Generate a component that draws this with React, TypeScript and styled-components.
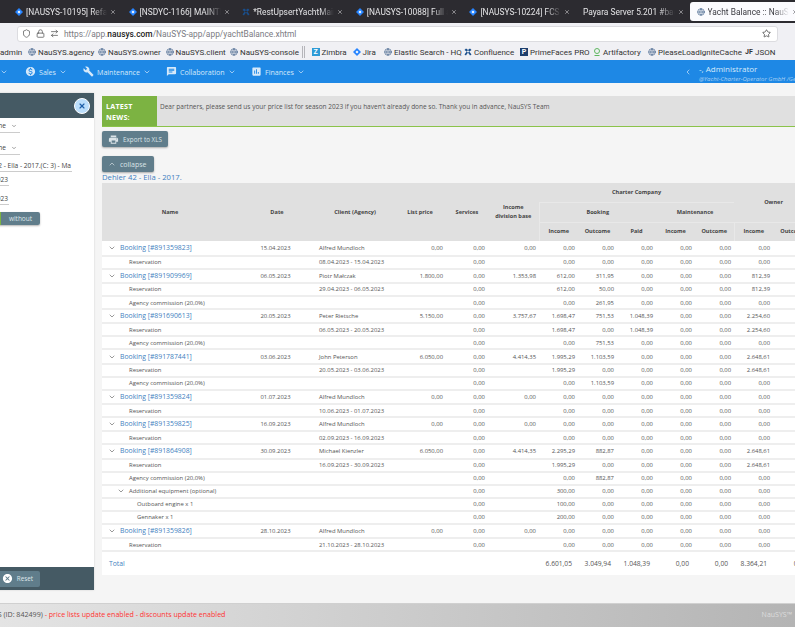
import React from 'react';
import styled, { createGlobalStyle } from 'styled-components';
import { ChevronDown, ChevronUp, ChevronLeft, X, Shield, Lock, ArrowRightLeft, Star, Globe } from 'lucide-react';
import { MdMonetizationOn, MdBuild, MdChat, MdAssessment, MdPrint, MdCancel } from 'react-icons/md';

const Global = createGlobalStyle`
  html, body { margin: 0; padding: 0; background: #f5f5f5; }
  body { font-family: "Open Sans", "Noto Sans", sans-serif; }
`;
const Viewport = styled.div`width: 795px; height: 627px; overflow: hidden; background: #f5f5f5;`;
const Canvas = styled.div`width: 1000px; margin-left: -60px;`;

const TabBar = styled.div`height: 23px; background: #2c2b30; display: flex; padding: 2px 0 0 68px; box-sizing: border-box;`;
const Tab = styled.div<{ $active?: boolean }>`
  width: 113.6px; height: 19px; flex: none; box-sizing: border-box; display: flex; align-items: center; padding: 0 5.6px 0 7px; gap: 3px;
  background: ${p => p.$active ? '#fbfbfe' : 'transparent'}; border-radius: 3px;
  color: ${p => p.$active ? '#3a3a40' : '#e4e4e6'}; font: 8.4px Roboto, sans-serif;
`;
const TabIcon = styled.svg`width: 8px; height: 8px; flex: none;`;
const TabTitle = styled.span`flex: 1; white-space: nowrap; overflow: hidden; mask-image: linear-gradient(90deg, #000 82%, transparent);`;
const TabClose = styled(X)`width: 6px; height: 6px; flex: none;`;

const ToolBar = styled.div`height: 21px; background: #f0f0f4; display: flex; align-items: center; padding-left: 77px; box-sizing: border-box;`;
const UrlBox = styled.div`width: 761px; height: 16px; background: #fff; border: 1px solid #dcdce0; border-radius: 3px; box-sizing: border-box; display: flex; align-items: center; padding: 0 6px 0 4px; gap: 5px; color: #7b7b82; font: 8.4px Roboto, sans-serif;`;
const UrlText = styled.span`flex: 1; white-space: nowrap; b { color: #222; font-weight: 500; }`;

const Bookmarks = styled.div`height: 16px; background: #f0f0f4; display: flex; align-items: center; padding-left: 60px; font: 8px Roboto, sans-serif; color: #333;`;
const Mark = styled.span<{ $w: number }>`width: ${p => p.$w}px; flex: none; display: flex; align-items: center; gap: 2px; white-space: nowrap;`;
const MarkSep = styled.span`width: 3px; height: 12px; border-left: 1px solid #b5b5ba; border-right: 1px solid #b5b5ba; box-sizing: border-box; margin: 0 6.5px 0 0; flex: none;`;
const MarkGlobe = styled(Globe)`width: 8px; height: 8px; color: #44648c; flex: none;`;
const MarkSvg = styled.svg`width: 8px; height: 8px; flex: none;`;
const MarkLetter = styled.span<{ $c?: string; $bg?: string }>`font-size: 7px; font-weight: 700; color: ${p => p.$c || '#333'}; background: ${p => p.$bg || 'transparent'}; min-width: 8px; text-align: center; line-height: 8px; flex: none;`;

const NavBar = styled.div`height: 23px; background: #1e88e5; display: flex; align-items: center; padding-left: 60px; color: #d6e9fa; font-size: 7.1px;`;
const NavItem = styled.div<{ $w: number }>`width: ${p => p.$w}px; flex: none; display: flex; align-items: center; gap: 3px; white-space: nowrap; svg { flex: none; }`;
const NavUser = styled.div`margin-left: 7px; display: flex; flex-direction: column; gap: 2px; padding-top: 2px;`;
const NavName = styled.span`font-size: 8px; line-height: 10px; color: #d8ebfb;`;
const NavOrg = styled.span`font-size: 6px; line-height: 6px; font-style: italic; color: #a8d0f3; white-space: nowrap;`;
const NavSpacer = styled.div`width: 373px; flex: none;`;

const Main = styled.div`height: 520px; display: flex; align-items: flex-start;`;
const Side = styled.aside`width: 154px; height: 497px; margin-top: 10px; flex: none; background: #fff; display: flex; flex-direction: column; box-shadow: 0 0 2px rgba(0,0,0,.15);`;
const SideHead = styled.div`height: 25px; background: #455a64; display: flex; align-items: center; justify-content: flex-end; padding-right: 4px; flex: none;`;
const CloseBtn = styled.div`width: 16px; height: 16px; border-radius: 50%; background: #bbdefb; border: 1px solid #fff; box-sizing: border-box; display: flex; align-items: center; justify-content: center; color: #1f5fa8;`;
const SideBody = styled.div`flex: 1; display: flex; flex-direction: column; font-size: 6.6px; color: #444; padding-left: 40px;`;
const Field = styled.div<{ $w: number; $top: number; $end?: boolean }>`
  width: ${p => p.$w}px; margin-top: ${p => p.$top}px; height: 13px; border-bottom: 1px solid #ccc; display: flex; align-items: ${p => p.$end ? 'flex-end' : 'center'}; justify-content: flex-end; gap: 5px; white-space: nowrap; overflow: hidden; box-sizing: border-box; line-height: 10px; padding-right: ${p => p.$end ? 1 : 3}px;
`;
const Toggle = styled.div`margin-top: 7px; display: flex; height: 13px; width: 60px; align-self: flex-start; border-radius: 2px; overflow: hidden; box-shadow: 0 1px 2px rgba(0,0,0,.3); font-size: 6.5px;`;
const ToggleOn = styled.span`width: 21px; background: #7cb342;`;
const ToggleOff = styled.span`flex: 1; background: #607d8b; color: #dfe7ea; text-align: center; line-height: 13px;`;
const SideFoot = styled.div`height: 23px; background: #455a64; flex: none; display: flex; align-items: center; padding-left: 20px;`;
const ResetBtn = styled.div`width: 80px; height: 16px; background: #607d8b; border-radius: 2px; display: flex; align-items: center; justify-content: flex-end; gap: 4px; padding-right: 7px; box-sizing: border-box; color: #dfe7ea; font-size: 6.3px;`;

const Content = styled.main`margin-left: 8px; width: 838px; flex: none; padding-top: 13px;`;
const News = styled.div`height: 31px; display: flex; background: #e0e0e0; border-bottom: 1px solid #8bc34a; box-sizing: border-box; font-size: 6.5px; color: #555;`;
const NewsTag = styled.div`width: 55px; background: #7cb342; color: #fff; font-weight: 700; font-size: 7.2px; line-height: 11px; padding: 5px 0 0 4px; box-sizing: border-box; letter-spacing: .2px;`;
const NewsText = styled.div`padding: 6px 0 0 3px; white-space: nowrap;`;
const Btn = styled.div<{ $w: number; $top: number; $fs: number }>`width: ${p => p.$w}px; height: 16px; margin-top: ${p => p.$top}px; background: #607d8b; color: #dbe4e8; border-radius: 2px; box-shadow: 0 1px 2px rgba(0,0,0,.3); display: flex; align-items: center; gap: 4px; padding-left: 6px; box-sizing: border-box; font-size: ${p => p.$fs}px;`;
const Title = styled.div`font-size: 7.7px; line-height: 11px; color: #3f7fc0; height: 11px;`;

const Table = styled.table`border-collapse: collapse; table-layout: fixed; width: 711px; font-size: 5.9px; color: #555; background: #fff;`;
const Th = styled.th<{ $l?: boolean; $t?: boolean }>`
  background: #e0e0e0; color: #444; font-weight: 700; font-size: 5.6px; line-height: 9px; padding: 0; text-align: center; height: 18.8px;
  border-left: ${p => p.$l ? '1px solid #e8e8e8' : 'none'}; border-top: ${p => p.$t ? '1px solid #e8e8e8' : 'none'};
`;
const Tr = styled.tr<{ $h: number }>`height: ${p => p.$h}px; border-bottom: 2px solid #eeeeee;`;
const Td = styled.td<{ $a?: 'r' | 'c' }>`padding: 0 3px 0 0; white-space: nowrap; overflow: visible; text-align: ${p => p.$a === 'r' ? 'right' : p.$a === 'c' ? 'center' : 'left'}; line-height: 8px;`;
const ClientCell = styled(Td)`padding-left: 3px;`;
const NameBox = styled.div<{ $p: number }>`display: flex; align-items: center; padding-left: ${p => p.$p}px;`;
const Toggler = styled(ChevronDown)`width: 8px; height: 8px; color: #666; margin-left: -12px; margin-right: 4px; flex: none;`;
const Booking = styled.span`color: #3f7fc0; font-size: 6.85px;`;
const TotalRow = styled.tr`height: 24px;`;
const TotalLabel = styled.span`color: #3f7fc0; font-size: 6.8px; padding-left: 7px;`;
const TotalNum = styled(Td)`font-size: 6.7px; color: #555; padding-right: 6px;`;

const Footer = styled.footer`height: 24px; background: linear-gradient(90deg, #e4e4e4 60px, #b4b4b4 855px); display: flex; align-items: center; justify-content: space-between; font-size: 7.1px; color: #555; padding: 0 3px 3px 21px; width: 855px; box-sizing: border-box; border-top: 1px solid #d0d0d0;`;
const FooterRed = styled.span`color: #f33;`;
const FooterBrand = styled.span`color: #ddd; font-size: 7px;`;

const Diamond = ({ as: C = TabIcon }: { as?: any }) => (
  <C viewBox="0 0 16 16"><path d="M8 0l8 8-8 8-8-8z" fill="#2684ff" /><path d="M8 5l3 3-3 3-3-3z" fill="#fff" /></C>
);
const Cross = ({ as: C = TabIcon }: { as?: any }) => (
  <C viewBox="0 0 16 16"><path d="M1 13C5 8 9 2 12 1l3 3C10 7 6 11 4 15zM15 13C11 8 7 2 4 1L1 4c5 3 9 7 11 11z" fill="#1a4f8c" /></C>
);

const tabs = [
  { t: '[NAUSYS-10195] Refactoring', i: 'd' }, { t: '[NSDYC-1166] MAINTENANCE', i: 'd' }, { t: '*RestUpsertYachtMaintenance', i: 'c' },
  { t: '[NAUSYS-10088] Full add', i: 'd' }, { t: '[NAUSYS-10224] FCS - price', i: 'd' }, { t: 'Payara Server 5.201 #badassfish', i: '' },
  { t: 'Yacht Balance :: NauSYS', i: 'g', a: true },
];

const Z = '0,00';
type R = { k: 'b' | 's' | 'a' | 'i'; n: string; d?: string; c?: string; lp?: string; ib?: string; v: string[] };
const z6 = [Z, Z, Z, Z, Z, Z];
const rows: R[] = [
  { k: 'b', n: 'Booking [#891359823]', d: '15.04.2023', c: 'Alfred Mundloch', lp: Z, ib: Z, v: z6 },
  { k: 's', n: 'Reservation', c: '08.04.2023 - 15.04.2023', v: z6 },
  { k: 'b', n: 'Booking [#891909969]', d: '06.05.2023', c: 'Piotr Małczak', lp: '1.800,00', ib: '1.353,98', v: ['612,00', '311,95', Z, Z, Z, '812,39'] },
  { k: 's', n: 'Reservation', c: '29.04.2023 - 06.05.2023', v: ['612,00', '50,00', Z, Z, Z, '812,39'] },
  { k: 's', n: 'Agency commission (20,0%)', v: [Z, '261,95', Z, Z, Z, Z] },
  { k: 'b', n: 'Booking [#891690613]', d: '20.05.2023', c: 'Peter Rietsche', lp: '5.150,00', ib: '3.757,67', v: ['1.698,47', '751,53', '1.048,39', Z, Z, '2.254,60'] },
  { k: 's', n: 'Reservation', c: '06.05.2023 - 20.05.2023', v: ['1.698,47', Z, '1.048,39', Z, Z, '2.254,60'] },
  { k: 's', n: 'Agency commission (20,0%)', v: [Z, '751,53', Z, Z, Z, Z] },
  { k: 'b', n: 'Booking [#891787441]', d: '03.06.2023', c: 'John Peterson', lp: '6.050,00', ib: '4.414,35', v: ['1.995,29', '1.103,59', Z, Z, Z, '2.648,61'] },
  { k: 's', n: 'Reservation', c: '20.05.2023 - 03.06.2023', v: ['1.995,29', Z, Z, Z, Z, '2.648,61'] },
  { k: 's', n: 'Agency commission (20,0%)', v: [Z, '1.103,59', Z, Z, Z, Z] },
  { k: 'b', n: 'Booking [#891359824]', d: '01.07.2023', c: 'Alfred Mundloch', lp: Z, ib: Z, v: z6 },
  { k: 's', n: 'Reservation', c: '10.06.2023 - 01.07.2023', v: z6 },
  { k: 'b', n: 'Booking [#891359825]', d: '16.09.2023', c: 'Alfred Mundloch', lp: Z, ib: Z, v: z6 },
  { k: 's', n: 'Reservation', c: '02.09.2023 - 16.09.2023', v: z6 },
  { k: 'b', n: 'Booking [#891864908]', d: '30.09.2023', c: 'Michael Kienzler', lp: '6.050,00', ib: '4.414,35', v: ['2.295,29', '882,87', Z, Z, Z, '2.648,61'] },
  { k: 's', n: 'Reservation', c: '16.09.2023 - 30.09.2023', v: ['1.995,29', Z, Z, Z, Z, '2.648,61'] },
  { k: 's', n: 'Agency commission (20,0%)', v: [Z, '882,87', Z, Z, Z, Z] },
  { k: 'a', n: 'Additional equipment (optional)', v: ['300,00', Z, Z, Z, Z, Z] },
  { k: 'i', n: 'Outboard engine x 1', v: ['100,00', Z, Z, Z, Z, Z] },
  { k: 'i', n: 'Gennaker x 1', v: ['200,00', Z, Z, Z, Z, Z] },
  { k: 'b', n: 'Booking [#891359826]', d: '28.10.2023', c: 'Alfred Mundloch', lp: Z, ib: Z, v: z6 },
  { k: 's', n: 'Reservation', c: '21.10.2023 - 28.10.2023', v: z6 },
];
const widths = [136, 78, 78, 52, 42, 51, 39, 39, 39, 39, 39, 39, 40];
const pad = { b: 18, s: 27, a: 27, i: 35 };

export default function App() {
  return (
    <Viewport>
      <Global />
      <Canvas>
        <TabBar>
          {tabs.map(t => (
            <Tab key={t.t} $active={t.a}>
              {t.i === 'd' && <Diamond />}
              {t.i === 'c' && <Cross />}
              {t.i === 'g' && <MarkGlobe />}
              <TabTitle>{t.t}</TabTitle>
              <TabClose strokeWidth={2} />
            </Tab>
          ))}
        </TabBar>
        <ToolBar>
          <UrlBox>
            <Shield size={9} color="#555" />
            <Lock size={9} color="#555" />
            <ArrowRightLeft size={9} color="#555" />
            <UrlText>https://app.<b>nausys.com</b>/NauSYS-app/app/yachtBalance.xhtml</UrlText>
            <Star size={9} color="#444" />
          </UrlBox>
        </ToolBar>
        <Bookmarks>
          <Mark $w={28}>admin</Mark>
          <Mark $w={70}><MarkGlobe />NauSYS.agency</Mark>
          <Mark $w={67.5}><MarkGlobe />NauSYS.owner</Mark>
          <Mark $w={64.5}><MarkGlobe />NauSYS.client</Mark>
          <Mark $w={72}><MarkGlobe />NauSYS-console</Mark>
          <MarkSep />
          <Mark $w={41}><MarkLetter $c="#fff" $bg="#2e9bd6">Z</MarkLetter>Zimbra</Mark>
          <Mark $w={31.5}><Diamond as={MarkSvg} />Jira</Mark>
          <Mark $w={80}><MarkGlobe />Elastic Search - HQ</Mark>
          <Mark $w={56}><Cross as={MarkSvg} />Confluence</Mark>
          <Mark $w={73}><MarkLetter $c="#fff" $bg="#1d3f6e">P</MarkLetter>PrimeFaces PRO</Mark>
          <Mark $w={55}><MarkSvg viewBox="0 0 16 16"><circle cx="8" cy="6" r="5" fill="none" stroke="#5fb760" strokeWidth="2" /><path d="M3 15h10" stroke="#5fb760" strokeWidth="2" /></MarkSvg>Artifactory</Mark>
          <Mark $w={97}><MarkGlobe />PleaseLoadIgniteCache</Mark>
          <Mark $w={40}><MarkLetter>JF</MarkLetter>JSON</Mark>
        </Bookmarks>
        <NavBar>
          <NavItem $w={25}><ChevronDown size={8} /></NavItem>
          <NavItem $w={58}><MdMonetizationOn size={11} />Sales<ChevronDown size={8} /></NavItem>
          <NavItem $w={83}><MdBuild size={11} />Maintenance<ChevronDown size={8} /></NavItem>
          <NavItem $w={85}><MdChat size={11} />Collaboration<ChevronDown size={8} /></NavItem>
          <NavItem $w={60}><MdAssessment size={11} />Finances<ChevronDown size={8} /></NavItem>
          <NavSpacer />
          <ChevronLeft size={8} />
          <NavUser>
            <NavName>-, Administrator</NavName>
            <NavOrg>@Yacht-Charter-Operator GmbH /General Agent</NavOrg>
          </NavUser>
        </NavBar>
        <Main>
          <Side>
            <SideHead><CloseBtn><X size={8} strokeWidth={3.5} /></CloseBtn></SideHead>
            <SideBody>
              <Field $w={40} $top={2}>None<ChevronDown size={6} /></Field>
              <Field $w={40} $top={9}>None<ChevronDown size={6} /></Field>
              <Field $w={92} $top={4} $end>Dehler 42 - Ella - 2017.(C: 3) - Ma</Field>
              <Field $w={29} $top={1} $end>01.01.2023</Field>
              <Field $w={29} $top={6} $end>31.12.2023</Field>
              <Toggle><ToggleOn /><ToggleOff>without</ToggleOff></Toggle>
            </SideBody>
            <SideFoot><ResetBtn><MdCancel size={11} color="#fff" />Reset</ResetBtn></SideFoot>
          </Side>
          <Content>
            <News>
              <NewsTag>LATEST<br />NEWS:</NewsTag>
              <NewsText>Dear partners, please send us your price list for season 2023 if you haven't already done so. Thank you in advance, NauSYS Team</NewsText>
            </News>
            <Btn $w={66} $top={4} $fs={6.3}><MdPrint size={11} />Export to XLS</Btn>
            <Btn $w={52} $top={9} $fs={7}><ChevronUp size={8} />collapse</Btn>
            <Title>Dehler 42 - Ella - 2017.</Title>
            <Table>
              <colgroup>{widths.map((w, i) => <col key={i} style={{ width: w }} />)}</colgroup>
              <thead>
                <tr>
                  <Th rowSpan={3}>Name</Th><Th rowSpan={3}>Date</Th><Th rowSpan={3}>Client (Agency)</Th>
                  <Th rowSpan={3}>List price</Th><Th rowSpan={3}>Services</Th><Th rowSpan={3}>Income<br />division base</Th>
                  <Th colSpan={5}>Charter Company</Th><Th colSpan={2} rowSpan={2}>Owner</Th>
                </tr>
                <tr>
                  <Th colSpan={3} $l $t>Booking</Th><Th colSpan={2} $t>Maintenance</Th>
                </tr>
                <tr>
                  <Th $l $t>Income</Th><Th $t>Outcome</Th><Th $t>Paid</Th><Th $t>Income</Th><Th $t>Outcome</Th><Th $l $t>Income</Th><Th $t>Outcome</Th>
                </tr>
              </thead>
              <tbody>
                {rows.map((r, i) => (
                  <Tr key={i} $h={r.k === 'b' ? 14.2 : 13.1}>
                    <Td>
                      <NameBox $p={pad[r.k]}>
                        {(r.k === 'b' || r.k === 'a') && <Toggler />}
                        {r.k === 'b' ? <Booking>{r.n}</Booking> : r.n}
                      </NameBox>
                    </Td>
                    <Td $a="c">{r.d}</Td>
                    <ClientCell>{r.c}</ClientCell>
                    <Td $a="r">{r.lp}</Td>
                    <Td $a="r">{Z}</Td>
                    <Td $a="r">{r.ib}</Td>
                    {r.v.map((x, j) => <Td $a="r" key={j}>{x}</Td>)}
                    <Td $a="r">{Z}</Td>
                  </Tr>
                ))}
                <TotalRow>
                  <Td><TotalLabel>Total</TotalLabel></Td>
                  <Td /><Td /><Td /><Td /><Td />
                  {['6.601,05', '3.049,94', '1.048,39', Z, Z, '8.364,21', Z].map((x, j) => <TotalNum $a="r" key={j}>{x}</TotalNum>)}
                </TotalRow>
              </tbody>
            </Table>
          </Content>
        </Main>
        <Footer>
          <span>NAUSYS FCS (ID: 842499) <FooterRed>- price lists update enabled - discounts update enabled</FooterRed></span>
          <FooterBrand>NauSYS™</FooterBrand>
        </Footer>
      </Canvas>
    </Viewport>
  );
}
